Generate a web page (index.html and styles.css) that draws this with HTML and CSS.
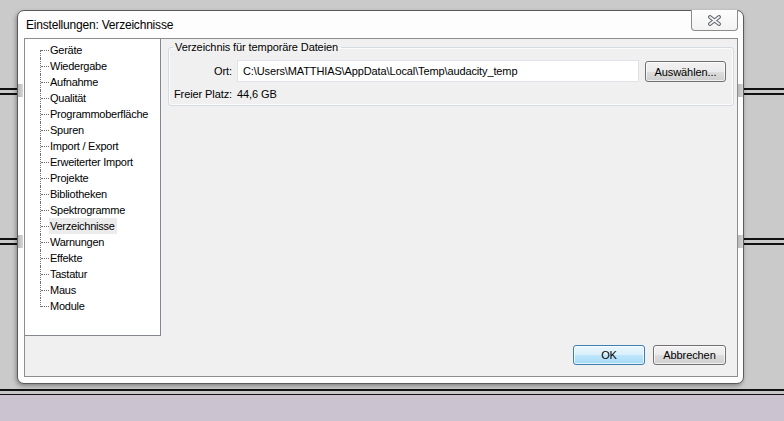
FILE: index.html
```html
<!DOCTYPE html>
<html lang="de">
<head>
<meta charset="utf-8">
<title>Einstellungen: Verzeichnisse</title>
<link rel="stylesheet" href="styles.css">
</head>
<body>
<div class="desktop">
  <div class="hline line-a1"></div>
  <div class="hline line-a2"></div>
  <div class="hline line-b1"></div>
  <div class="hline line-b2"></div>
  <div class="bottom-band"></div>

  <div class="dialog">
    <div class="titlebar">
      <span class="title">Einstellungen: Verzeichnisse</span>
      <div class="close">
        <svg width="15" height="11" viewBox="0 0 15 11">
          <path d="M3 2 L12 9 M12 2 L3 9" stroke="#5f6068" stroke-width="3.8" stroke-linecap="round" fill="none"/>
          <path d="M3 2 L12 9 M12 2 L3 9" stroke="#f4f4f6" stroke-width="1.8" stroke-linecap="round" fill="none"/>
        </svg>
      </div>
    </div>
    <div class="client">
      <div class="main">
        <ul class="tree">
          <li>Geräte</li>
          <li>Wiedergabe</li>
          <li>Aufnahme</li>
          <li>Qualität</li>
          <li>Programmoberfläche</li>
          <li>Spuren</li>
          <li>Import / Export</li>
          <li>Erweiterter Import</li>
          <li>Projekte</li>
          <li>Bibliotheken</li>
          <li>Spektrogramme</li>
          <li><span class="selected">Verzeichnisse</span></li>
          <li>Warnungen</li>
          <li>Effekte</li>
          <li>Tastatur</li>
          <li>Maus</li>
          <li>Module</li>
        </ul>
        <div class="page">
          <fieldset class="group">
            <legend>Verzeichnis für temporäre Dateien</legend>
            <div class="form">
              <label class="lbl">Ort:</label>
              <div class="field-row">
                <div class="textbox">C:\Users\MATTHIAS\AppData\Local\Temp\audacity_temp</div>
                <button class="btn choose">Auswählen...</button>
              </div>
              <span class="lbl">Freier Platz:</span>
              <span class="value">44,6 GB</span>
            </div>
          </fieldset>
        </div>
      </div>
      <div class="buttons">
        <button class="btn ok">OK</button>
        <button class="btn cancel">Abbrechen</button>
      </div>
    </div>
  </div>

  <div class="grip grip-l1"></div>
  <div class="grip grip-l2"></div>
  <div class="grip grip-r1"></div>
  <div class="grip grip-r2"></div>
</div>
</body>
</html>
```

FILE: styles.css
```css
* { box-sizing: border-box; }

html, body {
  margin: 0;
  padding: 0;
}

body {
  font-family: "Liberation Sans", Arial, sans-serif;
  font-size: 11px;
  color: #000;
}

.desktop {
  position: relative;
  width: 784px;
  height: 421px;
  overflow: hidden;
  background: #cacaca;
}

.hline {
  position: absolute;
  left: 0;
  width: 784px;
  background: #111;
}
.line-a1 { top: 88px; height: 2px; }
.line-a2 { top: 93px; height: 2px; }
.line-b1 { top: 238px; height: 2px; }
.line-b2 { top: 243px; height: 2px; }

.bottom-band {
  position: absolute;
  left: 0;
  top: 389px;
  width: 784px;
  height: 32px;
  border-top: 2px solid #111;
  background: linear-gradient(#c6c6c6 0, #c6c6c6 3px, #111 3px, #111 4px, #cbc3cf 4px);
}

.dialog {
  position: absolute;
  left: 17px;
  top: 10px;
  width: 727px;
  height: 374px;
  background: #fdfdfd;
  border: 1px solid #5b5b5b;
  border-radius: 7px;
  box-shadow: -1px 2px 4px rgba(0, 0, 0, 0.35);
  display: flex;
  flex-direction: column;
  padding: 0 5px 6px 6px;
}

.titlebar {
  height: 27px;
  display: flex;
  align-items: flex-start;
  justify-content: space-between;
}

.title {
  font-size: 12px;
  letter-spacing: -0.2px;
  padding: 7px 0 0 2px;
  line-height: 14px;
  color: #000;
}

.close {
  width: 47px;
  height: 21px;
  margin-top: -1px;
  border: 1px solid #8c8c8c;
  border-top: none;
  border-radius: 0 0 4px 4px;
  background: linear-gradient(#fdfdfd, #f3f3f3);
  display: flex;
  align-items: center;
  justify-content: center;
  padding-top: 1px;
}

.client {
  flex: 1;
  border: 1px solid #8d8d8d;
  background: #f0f0f0;
  display: flex;
  flex-direction: column;
}

.main {
  flex: 1;
  display: flex;
  align-items: flex-start;
}

.tree {
  list-style: none;
  margin: 0;
  padding: 3px 0 0 0;
  width: 136px;
  height: 297px;
  background: #fff;
  border-right: 1px solid #828790;
  border-bottom: 1px solid #828790;
  letter-spacing: -0.25px;
  color: #000;
}

.tree li {
  position: relative;
  height: 16px;
  line-height: 16px;
  padding-left: 25px;
  white-space: nowrap;
}

.tree li::before {
  content: "";
  position: absolute;
  left: 15px;
  top: 0;
  height: 16px;
  border-left: 1px dotted #6e6e6e;
}
.tree li:first-child::before { top: 8px; height: 8px; }
.tree li:last-child::before { height: 9px; }

.tree li::after {
  content: "";
  position: absolute;
  left: 16px;
  top: 8px;
  width: 8px;
  border-top: 1px dotted #6e6e6e;
}

.selected {
  display: inline-block;
  background: #ececec;
  margin-left: -1px;
  padding: 0 2px 0 1px;
  height: 16px;
}

.page {
  flex: 1;
  padding: 1px 3px 0 7px;
}

.group {
  margin: 0;
  border: 1px solid #d5dbe1;
  border-radius: 3px;
  box-shadow: inset 0 0 0 1px #fbfbfb;
  padding: 0 6px 3px 4px;
  min-width: 0;
}

.group legend {
  padding: 0 3px 0 2px;
  margin-left: 0;
  line-height: 14px;
  letter-spacing: -0.1px;
}

.form {
  display: grid;
  grid-template-columns: 59px 1fr;
  column-gap: 5px;
  row-gap: 4px;
  align-items: center;
  margin-top: 6px;
  letter-spacing: -0.1px;
}

.lbl {
  text-align: right;
  white-space: nowrap;
}

.field-row {
  display: flex;
  align-items: center;
  gap: 6px;
}

.textbox {
  width: 402px;
  height: 22px;
  line-height: 20px;
  background: #fff;
  border: 1px solid #dfe2e6;
  padding-left: 5px;
  white-space: nowrap;
  letter-spacing: -0.12px;
}

.value {
  line-height: 16px;
}

.btn {
  font-family: inherit;
  font-size: 11px;
  letter-spacing: -0.1px;
  color: #000;
  padding: 0;
  border: 1px solid #707070;
  border-radius: 3px;
  background: linear-gradient(#f2f2f2 0%, #ebebeb 50%, #dddddd 51%, #cfcfcf 100%);
  box-shadow: inset 0 0 0 1px rgba(255, 255, 255, 0.7);
}

.choose {
  width: 81px;
  height: 21px;
  margin-top: 1px;
}

.buttons {
  display: flex;
  justify-content: flex-end;
  gap: 8px;
  padding: 0 11px 11px 0;
}

.ok {
  width: 72px;
  height: 20px;
  border-color: #3c7fb1;
  background: linear-gradient(#eaf6fd 0%, #d9f0fc 50%, #bee6fd 51%, #a7d9f5 100%);
}

.cancel {
  width: 73px;
  height: 20px;
}

.grip {
  position: absolute;
  width: 5px;
  height: 13px;
  background: linear-gradient(90deg, #b8b8b8, #d6d6d6);
}
.grip-l1 { left: 18px; top: 84px; }
.grip-l2 { left: 18px; top: 235px; }
.grip-r1 { left: 738px; top: 84px; }
.grip-r2 { left: 738px; top: 235px; }
```
